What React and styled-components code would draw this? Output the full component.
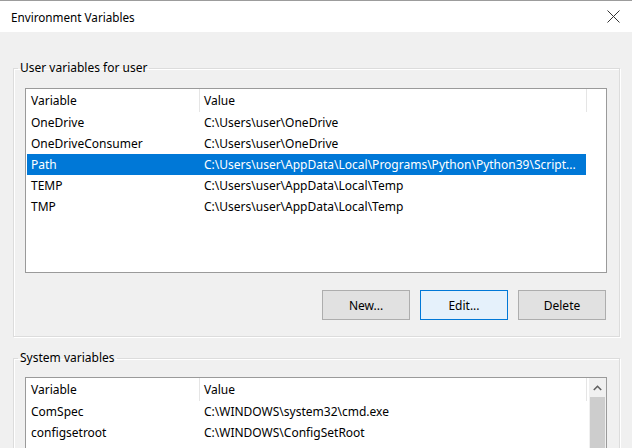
import styled, { createGlobalStyle } from "styled-components";

const GlobalStyle = createGlobalStyle`
  html, body {
    margin: 0;
    padding: 0;
    background: #f0f0f0;
    overflow: hidden;
  }
  * {
    box-sizing: border-box;
  }
`;

const Window = styled.div`
  width: 632px;
  height: 448px;
  overflow: hidden;
  background: #f0f0f0;
  border-top: 1px solid #9c9c9c;
  font-family: "Noto Sans", "Open Sans", sans-serif;
  color: #000;
  display: flex;
  flex-direction: column;
`;

const TitleBar = styled.div`
  height: 31px;
  flex: 0 0 31px;
  background: #fff;
  display: flex;
  align-items: center;
  justify-content: space-between;
  padding: 0 12px 0 11px;
`;

const Title = styled.div`
  font-size: 11.7px;
  line-height: 16px;
`;

const CloseButton = styled.div`
  width: 14px;
  height: 14px;
  display: flex;
  align-items: center;
  justify-content: center;
`;

const Body = styled.div`
  padding: 28px 12px 0 13px;
  display: flex;
  flex-direction: column;
  gap: 13px;
`;

const Group = styled.fieldset`
  margin: 0;
  min-width: 0;
  border: 1px solid #dcdcdc;
  box-shadow: inset 1px 1px 0 #fff, 1px 1px 0 #fff;
  padding: ${(p) => p.$padTop}px 12px 16px 11px;
`;

const Legend = styled.legend`
  font-size: 12px;
  line-height: 16px;
  padding: 0 2px;
  margin-left: -7px;
`;

const ListView = styled.div`
  height: ${(p) => p.$height}px;
  background: #fff;
  border: 1px solid #9a9a9a;
  display: flex;
  overflow: hidden;
`;

const ListContent = styled.div`
  flex: 1 1 auto;
  min-width: 0;
`;

const Header = styled.div`
  height: 23px;
  display: grid;
  grid-template-columns: 174px 387px;
`;

const HeaderCell = styled.div`
  font-size: 12px;
  line-height: 23px;
  padding-left: ${(p) => (p.$first ? 5 : 4)}px;
  border-right: 1px solid #e5e5e5;
`;

const Row = styled.div`
  height: 21px;
  margin-left: 1px;
  width: 559px;
  display: grid;
  grid-template-columns: 173px 386px;
  background: ${(p) => (p.$selected ? "#0078d7" : "transparent")};
  color: ${(p) => (p.$selected ? "#fff" : "#000")};
`;

const Cell = styled.div`
  font-size: 12px;
  line-height: 21px;
  padding: 0 2px 0 4px;
  white-space: nowrap;
  overflow: hidden;
  text-overflow: ellipsis;
`;

const ScrollBar = styled.div`
  flex: 0 0 17px;
  background: #f0f0f0;
  display: flex;
  flex-direction: column;
`;

const ScrollArrow = styled.div`
  height: 19px;
  display: flex;
  align-items: center;
  justify-content: center;
`;

const ScrollThumb = styled.div`
  flex: 1;
  margin: 0 1px;
  background: #cdcdcd;
`;

const ButtonRow = styled.div`
  margin-top: 17px;
  display: flex;
  justify-content: flex-end;
  gap: 10px;
  padding-right: 1px;
`;

const Button = styled.div`
  width: 88px;
  height: 30px;
  display: flex;
  align-items: center;
  justify-content: center;
  font-size: 12px;
  background: ${(p) => (p.$focused ? "#e5f1fb" : "#e1e1e1")};
  border: 1px solid ${(p) => (p.$focused ? "#0078d7" : "#adadad")};
`;

// the list shows the path already shortened, the way the dialog draws it
const userVars = [
  ["OneDrive", "C:\\Users\\user\\OneDrive"],
  ["OneDriveConsumer", "C:\\Users\\user\\OneDrive"],
  ["Path", "C:\\Users\\user\\AppData\\Local\\Programs\\Python\\Python39\\Script..."],
  ["TEMP", "C:\\Users\\user\\AppData\\Local\\Temp"],
  ["TMP", "C:\\Users\\user\\AppData\\Local\\Temp"],
];

const systemVars = [
  ["ComSpec", "C:\\WINDOWS\\system32\\cmd.exe"],
  ["configsetroot", "C:\\WINDOWS\\ConfigSetRoot"],
];

const CloseIcon = () => (
  <svg width="13" height="13" viewBox="0 0 13 13">
    <path d="M0.5 0.5 L12.5 12.5 M12.5 0.5 L0.5 12.5" stroke="#333" strokeWidth="1" fill="none" />
  </svg>
);

const UpChevron = () => (
  <svg width="9" height="6" viewBox="0 0 9 6">
    <path d="M0.8 5 L4.5 1.3 L8.2 5" stroke="#606060" strokeWidth="1.6" fill="none" />
  </svg>
);

const VarTable = ({ rows, selected }) => (
  <ListContent>
    <Header>
      <HeaderCell $first>Variable</HeaderCell>
      <HeaderCell>Value</HeaderCell>
    </Header>
    {rows.map(([name, value]) => (
      <Row key={name} $selected={name === selected}>
        <Cell>{name}</Cell>
        <Cell>{value}</Cell>
      </Row>
    ))}
  </ListContent>
);

export default function App() {
  return (
    <>
      <GlobalStyle />
      <Window>
        <TitleBar>
          <Title>Environment Variables</Title>
          <CloseButton>
            <CloseIcon />
          </CloseButton>
        </TitleBar>
        <Body>
          <Group $padTop={12}>
            <Legend>User variables for user</Legend>
            <ListView $height={185}>
              <VarTable rows={userVars} selected="Path" />
            </ListView>
            <ButtonRow>
              <Button>New...</Button>
              <Button $focused>Edit...</Button>
              <Button>Delete</Button>
            </ButtonRow>
          </Group>
          <Group $padTop={11}>
            <Legend>System variables</Legend>
            <ListView $height={185}>
              <VarTable rows={systemVars} />
              <ScrollBar>
                <ScrollArrow>
                  <UpChevron />
                </ScrollArrow>
                <ScrollThumb />
              </ScrollBar>
            </ListView>
          </Group>
        </Body>
      </Window>
    </>
  );
}
